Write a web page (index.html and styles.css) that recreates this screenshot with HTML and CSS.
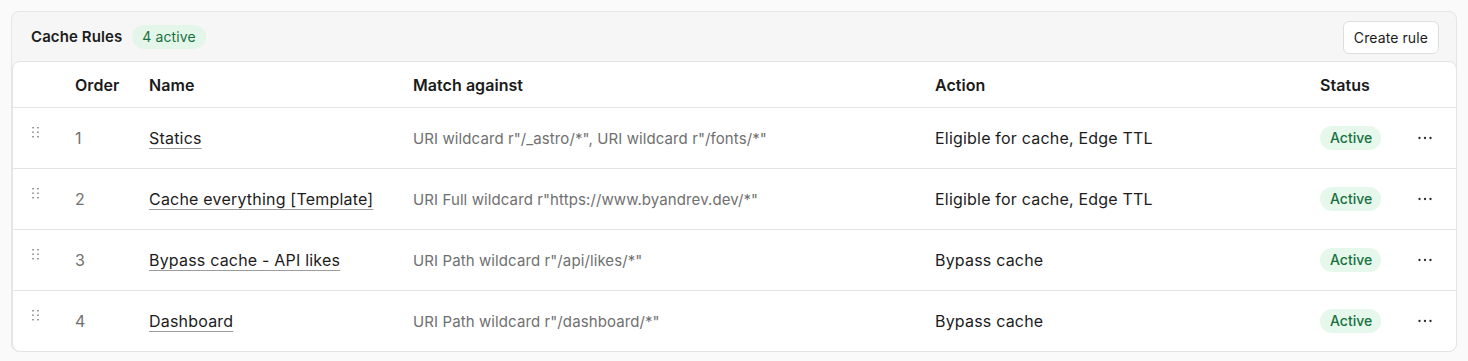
FILE: index.html
```html
<!DOCTYPE html>
<html lang="en">
<head>
<meta charset="utf-8">
<title>Cache Rules</title>
<link rel="stylesheet" href="styles.css">
</head>
<body>
<section class="card">
  <header class="card-head">
    <div class="title-wrap">
      <h2 class="title">Cache Rules</h2>
      <span class="count-badge">4 active</span>
    </div>
    <button class="btn">Create rule</button>
  </header>
  <div class="table">
    <div class="row head">
      <div class="cell"></div>
      <div class="cell">Order</div>
      <div class="cell">Name</div>
      <div class="cell">Match against</div>
      <div class="cell">Action</div>
      <div class="cell">Status</div>
      <div class="cell"></div>
    </div>
    <div class="row">
      <div class="cell handle"><svg width="8" height="12" viewBox="0 0 8 12"><g fill="#9a9a9a"><rect x="0" y="0" width="2" height="1.4"/><rect x="5" y="0" width="2" height="1.4"/><rect x="0" y="4.5" width="2" height="1.4"/><rect x="5" y="4.5" width="2" height="1.4"/><rect x="0" y="9" width="2" height="1.4"/><rect x="5" y="9" width="2" height="1.4"/></g></svg></div>
      <div class="cell order">1</div>
      <div class="cell"><a class="name" href="#">Statics</a></div>
      <div class="cell match">URI wildcard r"/_astro/*", URI wildcard r"/fonts/*"</div>
      <div class="cell action">Eligible for cache, Edge TTL</div>
      <div class="cell"><span class="status">Active</span></div>
      <div class="cell more"><svg width="16" height="6" viewBox="0 0 16 6"><g fill="#2a2a2a"><circle cx="2.5" cy="3" r="1.15"/><circle cx="8" cy="3" r="1.15"/><circle cx="13.5" cy="3" r="1.15"/></g></svg></div>
    </div>
    <div class="row">
      <div class="cell handle"><svg width="8" height="12" viewBox="0 0 8 12"><g fill="#9a9a9a"><rect x="0" y="0" width="2" height="1.4"/><rect x="5" y="0" width="2" height="1.4"/><rect x="0" y="4.5" width="2" height="1.4"/><rect x="5" y="4.5" width="2" height="1.4"/><rect x="0" y="9" width="2" height="1.4"/><rect x="5" y="9" width="2" height="1.4"/></g></svg></div>
      <div class="cell order">2</div>
      <div class="cell"><a class="name" href="#">Cache everything [Template]</a></div>
      <div class="cell match">URI Full wildcard r"https://www.byandrev.dev/*"</div>
      <div class="cell action">Eligible for cache, Edge TTL</div>
      <div class="cell"><span class="status">Active</span></div>
      <div class="cell more"><svg width="16" height="6" viewBox="0 0 16 6"><g fill="#2a2a2a"><circle cx="2.5" cy="3" r="1.15"/><circle cx="8" cy="3" r="1.15"/><circle cx="13.5" cy="3" r="1.15"/></g></svg></div>
    </div>
    <div class="row">
      <div class="cell handle"><svg width="8" height="12" viewBox="0 0 8 12"><g fill="#9a9a9a"><rect x="0" y="0" width="2" height="1.4"/><rect x="5" y="0" width="2" height="1.4"/><rect x="0" y="4.5" width="2" height="1.4"/><rect x="5" y="4.5" width="2" height="1.4"/><rect x="0" y="9" width="2" height="1.4"/><rect x="5" y="9" width="2" height="1.4"/></g></svg></div>
      <div class="cell order">3</div>
      <div class="cell"><a class="name" href="#">Bypass cache - API likes</a></div>
      <div class="cell match">URI Path wildcard r"/api/likes/*"</div>
      <div class="cell action">Bypass cache</div>
      <div class="cell"><span class="status">Active</span></div>
      <div class="cell more"><svg width="16" height="6" viewBox="0 0 16 6"><g fill="#2a2a2a"><circle cx="2.5" cy="3" r="1.15"/><circle cx="8" cy="3" r="1.15"/><circle cx="13.5" cy="3" r="1.15"/></g></svg></div>
    </div>
    <div class="row last">
      <div class="cell handle"><svg width="8" height="12" viewBox="0 0 8 12"><g fill="#9a9a9a"><rect x="0" y="0" width="2" height="1.4"/><rect x="5" y="0" width="2" height="1.4"/><rect x="0" y="4.5" width="2" height="1.4"/><rect x="5" y="4.5" width="2" height="1.4"/><rect x="0" y="9" width="2" height="1.4"/><rect x="5" y="9" width="2" height="1.4"/></g></svg></div>
      <div class="cell order">4</div>
      <div class="cell"><a class="name" href="#">Dashboard</a></div>
      <div class="cell match">URI Path wildcard r"/dashboard/*"</div>
      <div class="cell action">Bypass cache</div>
      <div class="cell"><span class="status">Active</span></div>
      <div class="cell more"><svg width="16" height="6" viewBox="0 0 16 6"><g fill="#2a2a2a"><circle cx="2.5" cy="3" r="1.15"/><circle cx="8" cy="3" r="1.15"/><circle cx="13.5" cy="3" r="1.15"/></g></svg></div>
    </div>
  </div>
</section>
</body>
</html>
```
FILE: styles.css
```css
* { box-sizing: border-box; }
html, body { margin: 0; }
body {
  background: #fafafa;
  font-family: Inter, "Noto Sans", "Liberation Sans", sans-serif;
  color: #1c1c1c;
  padding: 11px 11px 0 11px;
}
.card {
  background: #f6f6f6;
  border: 1px solid #e6e6e6;
  border-radius: 8px;
  width: 1446px;
}
.card-head {
  height: 49px;
  display: flex;
  align-items: center;
  justify-content: space-between;
  padding: 0 17px 0 19px;
}
.title-wrap { display: flex; align-items: center; gap: 10px; }
.title {
  margin: 0;
  font-size: 15px;
  font-weight: 600;
  color: #1c1c1c;
  letter-spacing: 0.1px;
}
.count-badge {
  font-size: 14px;
  color: #17703f;
  background: #e4f6ea;
  border-radius: 12px;
  padding: 3px 10px 4px;
  line-height: 17px;
  letter-spacing: 0.1px;
}
.btn {
  font-family: inherit;
  font-size: 14px;
  color: #1c1c1c;
  background: #fff;
  border: 1px solid #dedede;
  border-radius: 6px;
  height: 33px;
  padding: 0 10px;
  margin-top: 2px;
  letter-spacing: 0.1px;
}
.table {
  background: #fff;
  border: 1px solid #e4e4e4;
  border-radius: 8px;
  margin: 0 -1px -1px 0;
}
.row {
  display: grid;
  grid-template-columns: 62px 74px 264px 522px 385px 85px 1fr;
  height: 61px;
  border-bottom: 1px solid #e4e4e4;
  align-items: center;
}
.row.last { border-bottom: 0; height: 60px; }
.row.head {
  height: 46px;
  font-weight: 600;
  color: #1a1a1a;
  padding-top: 1px;
}
.cell { font-size: 16px; white-space: nowrap; letter-spacing: 0.2px; }
.row.head .cell { font-size: 16px; letter-spacing: 0.05px; }
.handle { padding-left: 19px; align-self: start; padding-top: 19px; display: flex; }
.order { color: #707070; }
.name {
  color: #1c1c1c;
  text-decoration: underline;
  text-decoration-color: #9c9c9c;
  text-underline-offset: 4px;
  text-decoration-thickness: 1px;
}
.match { color: #707070; font-size: 15px; letter-spacing: 0.1px; }
.action { color: #1c1c1c; }
.status {
  display: inline-block;
  font-size: 14px;
  font-weight: 500;
  color: #17703f;
  background: #e6f8ec;
  border-radius: 12px;
  padding: 3px 9px 4px 10px;
  line-height: 17px;
  letter-spacing: 0;
}
.more { padding-left: 12px; display: flex; }
```
